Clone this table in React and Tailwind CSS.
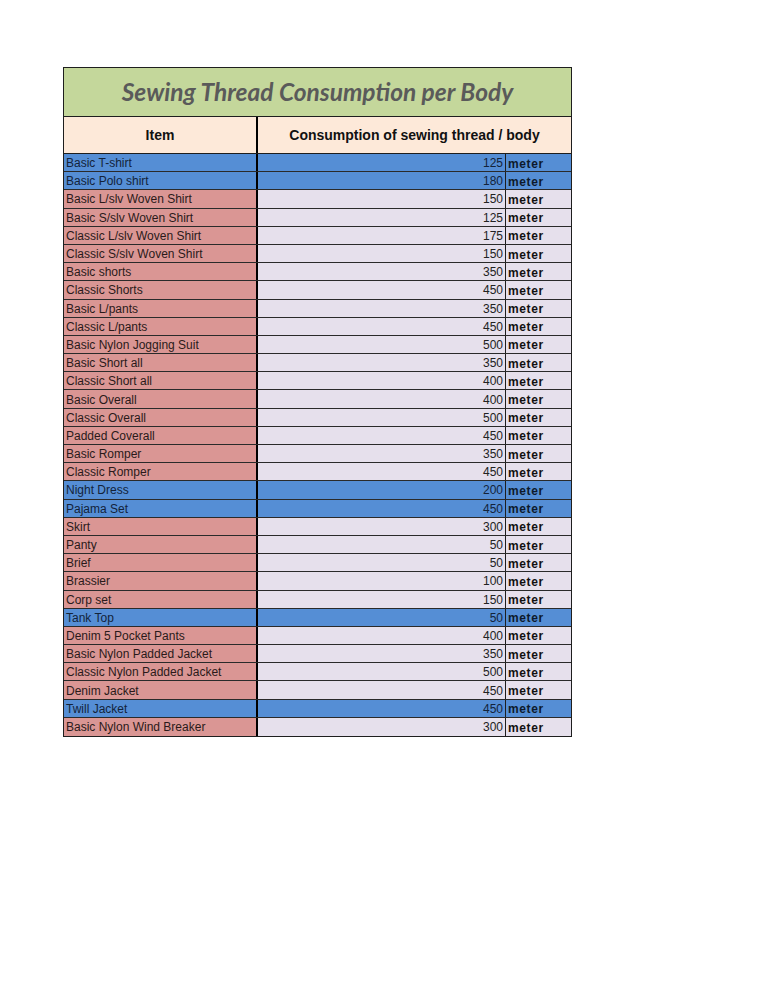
const rows = [
  ["Basic T-shirt", 125, true],
  ["Basic Polo shirt", 180, true],
  ["Basic L/slv Woven Shirt", 150],
  ["Basic S/slv Woven Shirt", 125],
  ["Classic L/slv Woven Shirt", 175],
  ["Classic S/slv Woven Shirt", 150],
  ["Basic shorts", 350],
  ["Classic Shorts", 450],
  ["Basic L/pants", 350],
  ["Classic L/pants", 450],
  ["Basic Nylon Jogging Suit", 500],
  ["Basic Short all", 350],
  ["Classic Short all", 400],
  ["Basic Overall", 400],
  ["Classic Overall", 500],
  ["Padded Coverall", 450],
  ["Basic Romper", 350],
  ["Classic Romper", 450],
  ["Night Dress", 200, true],
  ["Pajama Set", 450, true],
  ["Skirt", 300],
  ["Panty", 50],
  ["Brief", 50],
  ["Brassier", 100],
  ["Corp set", 150],
  ["Tank Top", 50, true],
  ["Denim 5 Pocket Pants", 400],
  ["Basic Nylon Padded Jacket", 350],
  ["Classic Nylon Padded Jacket", 500],
  ["Denim Jacket", 450],
  ["Twill Jacket", 450, true],
  ["Basic Nylon Wind Breaker", 300],
];

export default function App() {
  return (
    <div className="min-h-[994px] w-[768px] bg-white pt-[67px] pl-[63px]">
      <div className="w-[509px] border border-[#1e1e1e] font-['Liberation_Sans',Arial,sans-serif]">
        {/* Title */}
        <div className="h-[49px] bg-[#c4d79b] border-b border-[#1e1e1e] flex items-center justify-center">
          <span className="font-['Lato',sans-serif] italic font-bold text-[24.5px] text-[#5a5a5a] pt-[1px]">
            Sewing Thread Consumption per Body
          </span>
        </div>

        {/* Header */}
        <div className="grid grid-cols-[194px_1fr] h-[37px] bg-[#fde9d9] border-b border-[#1e1e1e]">
          <div className="border-r-2 border-black flex items-center justify-center text-[14px] font-bold text-[#111]">
            Item
          </div>
          <div className="flex items-center justify-center text-[14px] font-bold text-[#111]">
            Consumption of sewing thread / body
          </div>
        </div>

        {/* Rows */}
        {rows.map(([name, value, blue], i) => (
          <div
            key={name}
            className={`grid grid-cols-[194px_1fr_65px] h-[18.2px] text-[12px] leading-none ${
              i < rows.length - 1 ? "border-b border-[#2a2a2a]" : ""
            }`}
          >
            <div
              className={`border-r-2 border-black flex items-center pl-[2px] pt-[1px] ${
                blue ? "bg-[#558ed5] text-[#13233a]" : "bg-[#da9694] text-[#2a1a1a]"
              }`}
            >
              {name}
            </div>
            <div
              className={`flex items-center justify-end pr-[2px] pt-[1px] border-r border-[#1e1e1e] ${
                blue ? "bg-[#558ed5] text-[#13233a]" : "bg-[#e6e0ec] text-[#222]"
              }`}
            >
              {value}
            </div>
            <div
              className={`flex items-center pl-[2px] pt-[2px] font-bold text-[12px] tracking-[0.6px] ${
                blue ? "bg-[#558ed5] text-[#0d1a2c]" : "bg-[#e6e0ec] text-[#111]"
              }`}
            >
              meter
            </div>
          </div>
        ))}
      </div>
    </div>
  );
}
